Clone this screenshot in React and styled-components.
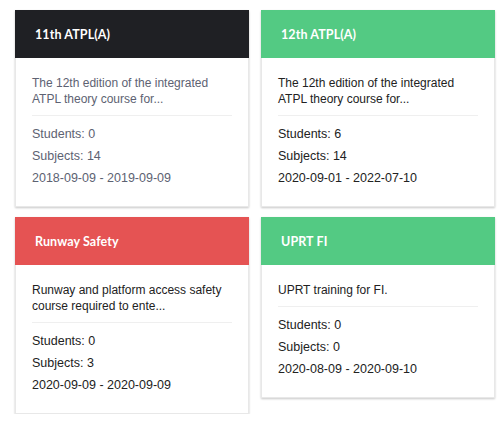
import React from "react";
import styled, { createGlobalStyle } from "styled-components";

const Global = createGlobalStyle`
  html, body { margin: 0; padding: 0; background: #fff; }
  body { font-family: "Liberation Sans", Arial, sans-serif; }
`;

const Grid = styled.div`
  display: grid;
  grid-template-columns: 234px 234px;
  column-gap: 12px;
  row-gap: 10px;
  align-items: start;
  padding: 10px 0 0 15px;
`;

const Card = styled.div`
  background: #fff;
  border: 1px solid #e8e8e8;
  border-top: none;
  box-shadow: 0 1px 2px rgba(0, 0, 0, 0.22);
  display: flex;
  flex-direction: column;
`;

const Header = styled.div`
  height: 48px;
  background: ${(p) => p.$color};
  display: flex;
  align-items: center;
  padding: 0 20px;
  margin: 0 -1px;
  color: #fff;
  font-family: Lato, "Open Sans", sans-serif;
  font-weight: 700;
  font-size: 12.5px;
  letter-spacing: 0.1px;
`;

const Body = styled.div`
  padding: 17px 16px 17px 16px;
  color: ${(p) => (p.$muted ? "#5d6272" : "#222")};
`;

const Desc = styled.div`
  font-size: 12px;
  line-height: 16px;
  padding-bottom: 8px;
  border-bottom: 1px solid #efefef;
  margin: 0 0 7px 0;
`;

const Stat = styled.div`
  font-size: 12.5px;
  line-height: 22px;
`;

const courses = [
  {
    title: "11th ATPL(A)",
    color: "#1f2024",
    muted: true,
    desc: "The 12th edition of the integrated ATPL theory course for...",
    students: 0,
    subjects: 14,
    dates: "2018-09-09 - 2019-09-09",
  },
  {
    title: "12th ATPL(A)",
    color: "#53ca83",
    desc: "The 12th edition of the integrated ATPL theory course for...",
    students: 6,
    subjects: 14,
    dates: "2020-09-01 - 2022-07-10",
  },
  {
    title: "Runway Safety",
    color: "#e55353",
    desc: "Runway and platform access safety course required to ente...",
    students: 0,
    subjects: 3,
    dates: "2020-09-09 - 2020-09-09",
  },
  {
    title: "UPRT FI",
    color: "#53ca83",
    desc: "UPRT training for FI.",
    students: 0,
    subjects: 0,
    dates: "2020-08-09 - 2020-09-10",
  },
];

export default function App() {
  return (
    <>
      <Global />
      <Grid>
        {courses.map((c) => (
          <Card key={c.title}>
            <Header $color={c.color}>{c.title}</Header>
            <Body $muted={c.muted}>
              <Desc>{c.desc}</Desc>
              <Stat>Students: {c.students}</Stat>
              <Stat>Subjects: {c.subjects}</Stat>
              <Stat>{c.dates}</Stat>
            </Body>
          </Card>
        ))}
      </Grid>
    </>
  );
}
